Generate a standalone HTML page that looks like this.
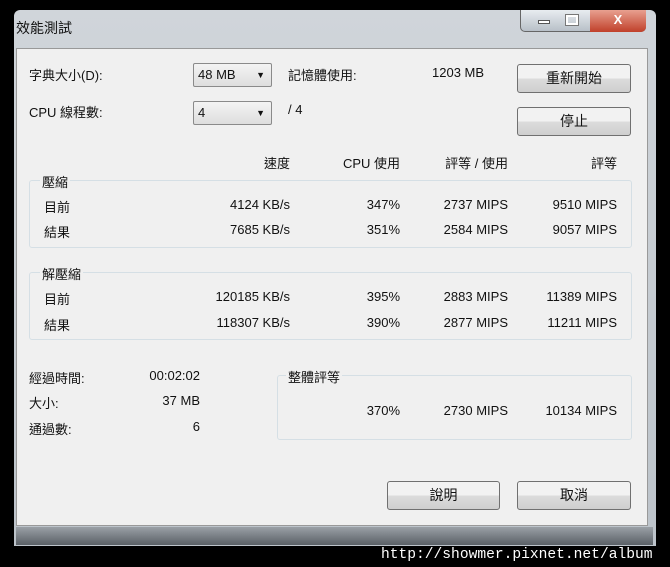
<!DOCTYPE html>
<html><head><meta charset="utf-8"><style>
*{margin:0;padding:0;box-sizing:border-box}
body{width:670px;height:567px;background:#000;position:relative;overflow:hidden;font-family:"Liberation Sans","Noto Sans CJK TC",sans-serif;font-size:13px;color:#111}
.a{position:absolute;white-space:nowrap}
.r{text-align:right}
.win{position:absolute;left:14px;top:10px;width:642px;height:536px;background:linear-gradient(#d0d5da,#bcc3ca);border-radius:6px 6px 0 0}
.client{position:absolute;left:16px;top:48px;width:632px;height:478px;background:#f0f0f0;border:1px solid #999}
.btn{position:absolute;border:1px solid #707070;border-radius:3px;background:linear-gradient(#f2f2f2 50%,#dcdcdc 50%,#cfcfcf);text-align:center;line-height:27px;font-size:14px}
.cb{position:absolute;border:1px solid #8a8a8a;border-radius:2px;background:linear-gradient(#f4f4f4,#dedede);height:24px;line-height:22px;padding-left:4px;font-size:13px}
.cb:after{content:"▼";position:absolute;right:6px;top:0;font-size:9px}
.grp{position:absolute;border:1px solid #d5dfe5;border-radius:3px}
</style></head><body>
<div class="win"></div>
<div class="a" style="left:16px;top:18px;font-size:14px">效能測試</div>
<div class="a" style="left:520px;top:10px;width:126px;height:22px;border:1px solid #666;border-top:none;border-radius:0 0 5px 5px;background:linear-gradient(#e8ecf0,#b8c0c8)"></div>
<div class="a" style="left:590px;top:10px;width:56px;height:22px;border-radius:0 0 5px 0;background:linear-gradient(#e8a090,#c0402a);color:#fff;text-align:center;font-weight:bold;line-height:20px">X</div>
<div class="a" style="left:538px;top:20px;width:12px;height:4px;background:#fff;border:1px solid #555"></div>
<div class="a" style="left:566px;top:15px;width:12px;height:10px;border:2px solid #fff;outline:1px solid #777"></div>
<div class="client"></div>
<div class="a" style="left:29px;top:65px">字典大小(D):</div>
<div class="cb" style="left:193px;top:63px;width:79px">48 MB</div>
<div class="a" style="left:288px;top:65px">記憶體使用:</div>
<div class="a" style="left:432px;top:65px">1203 MB</div>
<div class="btn" style="left:517px;top:64px;width:114px;height:29px">重新開始</div>
<div class="a" style="left:29px;top:102px">CPU 線程數:</div>
<div class="cb" style="left:193px;top:101px;width:79px">4</div>
<div class="a" style="left:288px;top:102px">/ 4</div>
<div class="btn" style="left:517px;top:107px;width:114px;height:29px">停止</div>

<div class="a r" style="left:230px;width:60px;top:153px">速度</div>
<div class="a r" style="left:320px;width:80px;top:153px">CPU 使用</div>
<div class="a r" style="left:420px;width:88px;top:153px">評等 / 使用</div>
<div class="a r" style="left:540px;width:77px;top:153px">評等</div>

<div class="grp" style="left:29px;top:180px;width:603px;height:68px"></div>
<div class="a" style="left:40px;top:172px;background:#f0f0f0;padding:0 2px">壓縮</div>
<div class="a" style="left:44px;top:197px">目前</div>
<div class="a" style="left:44px;top:222px">結果</div>
<div class="a r" style="left:190px;width:100px;top:197px">4124 KB/s</div>
<div class="a r" style="left:190px;width:100px;top:222px">7685 KB/s</div>
<div class="a r" style="left:330px;width:70px;top:197px">347%</div>
<div class="a r" style="left:330px;width:70px;top:222px">351%</div>
<div class="a r" style="left:408px;width:100px;top:197px">2737 MIPS</div>
<div class="a r" style="left:408px;width:100px;top:222px">2584 MIPS</div>
<div class="a r" style="left:517px;width:100px;top:197px">9510 MIPS</div>
<div class="a r" style="left:517px;width:100px;top:222px">9057 MIPS</div>

<div class="grp" style="left:29px;top:272px;width:603px;height:68px"></div>
<div class="a" style="left:40px;top:264px;background:#f0f0f0;padding:0 2px">解壓縮</div>
<div class="a" style="left:44px;top:289px">目前</div>
<div class="a" style="left:44px;top:315px">結果</div>
<div class="a r" style="left:190px;width:100px;top:289px">120185 KB/s</div>
<div class="a r" style="left:190px;width:100px;top:315px">118307 KB/s</div>
<div class="a r" style="left:330px;width:70px;top:289px">395%</div>
<div class="a r" style="left:330px;width:70px;top:315px">390%</div>
<div class="a r" style="left:408px;width:100px;top:289px">2883 MIPS</div>
<div class="a r" style="left:408px;width:100px;top:315px">2877 MIPS</div>
<div class="a r" style="left:517px;width:100px;top:289px">11389 MIPS</div>
<div class="a r" style="left:517px;width:100px;top:315px">11211 MIPS</div>

<div class="a" style="left:29px;top:368px">經過時間:</div>
<div class="a" style="left:29px;top:393px">大小:</div>
<div class="a" style="left:29px;top:419px">通過數:</div>
<div class="a r" style="left:120px;width:80px;top:368px">00:02:02</div>
<div class="a r" style="left:120px;width:80px;top:393px">37 MB</div>
<div class="a r" style="left:120px;width:80px;top:419px">6</div>

<div class="grp" style="left:277px;top:375px;width:355px;height:65px"></div>
<div class="a" style="left:286px;top:367px;background:#f0f0f0;padding:0 2px">整體評等</div>
<div class="a r" style="left:330px;width:70px;top:403px">370%</div>
<div class="a r" style="left:408px;width:100px;top:403px">2730 MIPS</div>
<div class="a r" style="left:517px;width:100px;top:403px">10134 MIPS</div>

<div class="btn" style="left:387px;top:481px;width:113px;height:29px">說明</div>
<div class="btn" style="left:517px;top:481px;width:114px;height:29px">取消</div>

<div class="a" style="left:16px;top:527px;width:637px;height:18px;background:linear-gradient(#9aa0a6,#5a6066)"></div>
<div class="a" style="left:381px;top:547px;color:#fff;font-family:'Liberation Mono',monospace;font-size:14.6px">http://showmer.pixnet.net/album</div>
</body></html>
